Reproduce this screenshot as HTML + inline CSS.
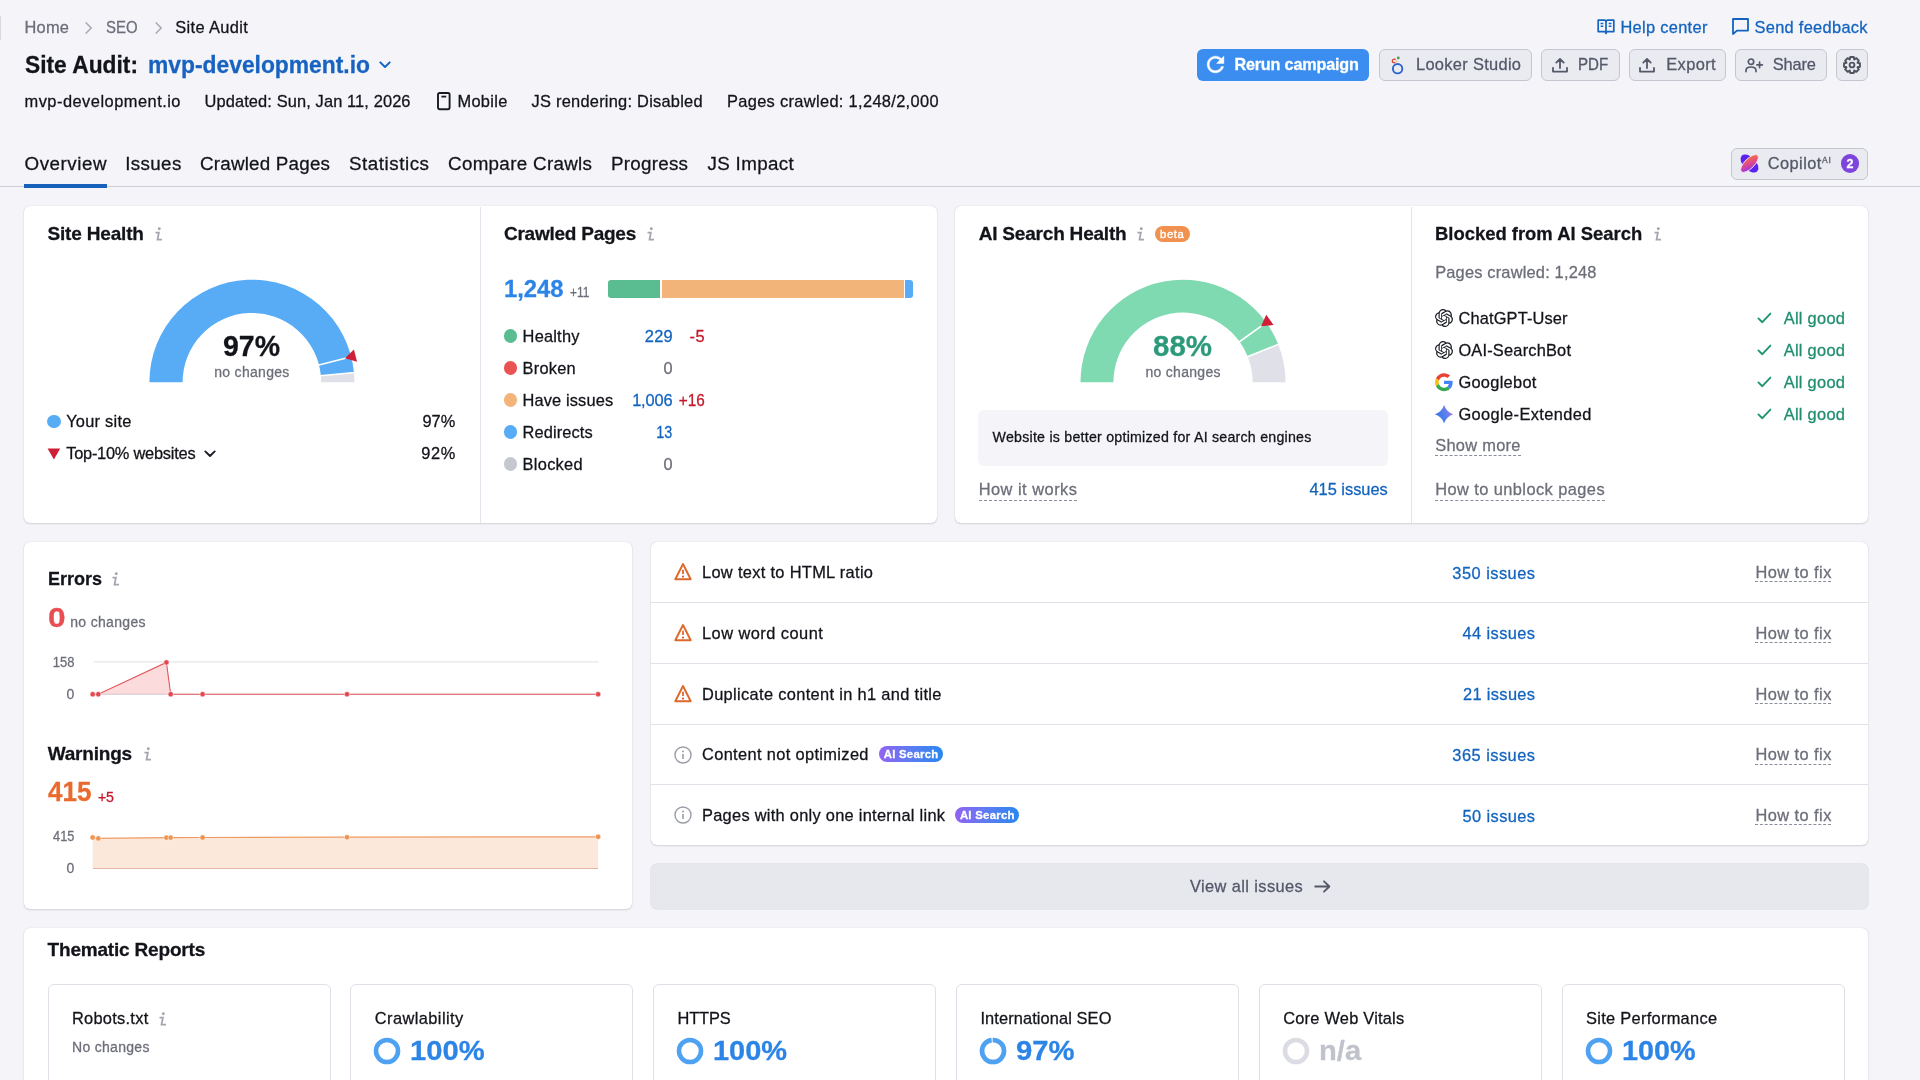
<!DOCTYPE html><html><head><meta charset="utf-8"><title>Site Audit</title><style>
*{box-sizing:border-box;margin:0;padding:0}
html,body{width:1920px;height:1080px;overflow:hidden;background:#f4f4f9;font-family:"Liberation Sans",sans-serif;}
body{position:relative}
#w{position:absolute;left:0;top:0;width:1920px;height:1080px;overflow:hidden;background:#f4f4f9;will-change:transform;transform:translateZ(0)}
.t{position:absolute;white-space:nowrap;font-family:"Liberation Sans",sans-serif;-webkit-text-stroke:.28px currentColor}
.a{position:absolute}
.card{position:absolute;background:#fff;border-radius:6px;box-shadow:0 0 1px rgba(25,27,35,.2),0 1px 2px rgba(25,27,35,.14)}
.btn{position:absolute;height:32px;top:49px;border-radius:6px;background:#e9ebf0;border:1px solid #c4c7cf}
.sub{position:absolute;top:983.6px;height:120px;width:283px;border:1px solid #dfe0e7;border-radius:6px;background:#fff}
.du{border-bottom:1px dashed #8a8e9b}
svg{position:absolute;overflow:visible}

</style></head><body><div id="w">
<div class="a" style="left:0;top:16px;width:1.1px;height:24px;background:#d9dae0"></div>
<svg style="left:85.3px;top:21.5px" width="8" height="12" viewBox="0 0 8 12" ><path d="M1.2 1 L6.2 6 L1.2 11" fill="none" stroke="#a9abb6" stroke-width="1.7" stroke-linecap="round" stroke-linejoin="round"/></svg>
<svg style="left:154.6px;top:21.5px" width="8" height="12" viewBox="0 0 8 12" ><path d="M1.2 1 L6.2 6 L1.2 11" fill="none" stroke="#a9abb6" stroke-width="1.7" stroke-linecap="round" stroke-linejoin="round"/></svg>
<svg style="left:378.8px;top:60.5px" width="12" height="8" viewBox="0 0 12 8" ><path d="M1.3 1.4 L6 6 L10.7 1.4" fill="none" stroke="#1467c5" stroke-width="2" stroke-linecap="round" stroke-linejoin="round"/></svg>
<svg style="left:436.7px;top:92.4px" width="14" height="18" viewBox="0 0 14 18" ><rect x="1" y="1" width="11.6" height="16.2" rx="1.6" fill="none" stroke="#191b23" stroke-width="1.9"/><path d="M4.4 4.6 H9.2" stroke="#191b23" stroke-width="1.8" stroke-linecap="butt"/></svg>
<div class="a" style="left:0;top:185.8px;width:1920px;height:1.4px;background:#cdd0d7"></div>
<div class="a" style="left:24px;top:184.2px;width:83px;height:3.5px;background:#1861bb"></div>
<svg style="left:1597px;top:18px" width="18" height="18" viewBox="0 0 18 18" ><path d="M9 3.6 V15.6 M1.2 2.2 H7.2 Q9 2.2 9 4 Q9 2.2 10.8 2.2 H16.8 V13.6 H10.8 Q9 13.6 9 15.4 Q9 13.6 7.2 13.6 H1.2 Z" fill="none" stroke="#1264bf" stroke-width="1.7" stroke-linejoin="round"/><path d="M3.6 5.4 H6.3 M3.6 8.2 H6.3 M11.7 5.4 H14.4 M11.7 8.2 H14.4" stroke="#1264bf" stroke-width="1.5"/></svg>
<svg style="left:1731.5px;top:18.3px" width="17" height="17" viewBox="0 0 17 17" ><path d="M1 1 H16 V12.6 H5 L1 16 Z" fill="none" stroke="#1264bf" stroke-width="1.8" stroke-linejoin="round"/></svg>
<div class="a" style="left:1197px;top:49px;width:172px;height:32px;border-radius:6px;background:#3b8eef"></div>
<svg style="left:1202.9px;top:52.3px" width="25" height="25" viewBox="0 0 24 24" ><path fill="#fff" stroke="#fff" stroke-width=".45" stroke-linejoin="round" d="M17.65 6.35C16.2 4.9 14.21 4 12 4c-4.42 0-7.99 3.58-7.99 8s3.57 8 7.99 8c3.73 0 6.84-2.55 7.73-6h-2.08c-.82 2.33-3.04 4-5.65 4-3.31 0-6-2.69-6-6s2.69-6 6-6c1.66 0 3.14.69 4.22 1.78L13 11h7V4l-2.35 2.35z"/></svg>
<div class="btn" style="left:1379px;width:153px"></div>
<svg style="left:1391px;top:55.5px" width="13" height="19" viewBox="0 0 13 19" ><circle cx="6.6" cy="12.7" r="4.7" fill="none" stroke="#2c63d2" stroke-width="1.9"/><path d="M4.6 3.9 A1.8 1.8 0 1 0 4.3 6.3" fill="none" stroke="#d8433b" stroke-width="1.3"/><circle cx="5.8" cy="5.4" r=".8" fill="#f0b840"/><circle cx="7.3" cy="1.9" r="1.35" fill="#3f9b4b"/></svg>
<div class="btn" style="left:1541px;width:79px"></div>
<div class="btn" style="left:1629px;width:97px"></div>
<div class="btn" style="left:1735px;width:92px"></div>
<div class="btn" style="left:1836px;width:32px"></div>
<svg style="left:1551.5px;top:56.5px" width="16" height="16" viewBox="0 0 16 16" ><path d="M8 11 V2.4 M4.3 5.6 L8 1.9 L11.7 5.6" fill="none" stroke="#545868" stroke-width="1.8" stroke-linecap="round" stroke-linejoin="round"/><path d="M1 10.8 V14.6 H15 V10.8" fill="none" stroke="#545868" stroke-width="1.8" stroke-linecap="round" stroke-linejoin="round"/></svg>
<svg style="left:1639.3px;top:56.5px" width="16" height="16" viewBox="0 0 16 16" ><path d="M8 11 V2.4 M4.3 5.6 L8 1.9 L11.7 5.6" fill="none" stroke="#545868" stroke-width="1.8" stroke-linecap="round" stroke-linejoin="round"/><path d="M1 10.8 V14.6 H15 V10.8" fill="none" stroke="#545868" stroke-width="1.8" stroke-linecap="round" stroke-linejoin="round"/></svg>
<svg style="left:1744.5px;top:57.5px" width="19" height="15" viewBox="0 0 19 15" ><circle cx="6" cy="3.7" r="2.7" fill="none" stroke="#545868" stroke-width="1.7"/><path d="M1 13.6 V12.4 Q1 9 6 9 Q11 9 11 12.4 V13.6" fill="none" stroke="#545868" stroke-width="1.7" stroke-linecap="round"/><path d="M14.6 4.2 V9.6 M11.9 6.9 H17.3" stroke="#545868" stroke-width="1.7" stroke-linecap="round"/></svg>
<svg style="left:1843.3px;top:55.9px" width="18" height="18" viewBox="0 0 18 18" ><path d="M7.31 1.08 L10.69 1.08 L11.28 3.45 L11.31 3.46 L13.41 2.20 L15.80 4.59 L14.54 6.69 L14.55 6.72 L16.92 7.31 L16.92 10.69 L14.55 11.28 L14.54 11.31 L15.80 13.41 L13.41 15.80 L11.31 14.54 L11.28 14.55 L10.69 16.92 L7.31 16.92 L6.72 14.55 L6.69 14.54 L4.59 15.80 L2.20 13.41 L3.46 11.31 L3.45 11.28 L1.08 10.69 L1.08 7.31 L3.45 6.72 L3.46 6.69 L2.20 4.59 L4.59 2.20 L6.69 3.46 L6.72 3.45 Z" fill="none" stroke="#50535f" stroke-width="2" stroke-linejoin="round"/><circle cx="9" cy="9" r="2.4" fill="none" stroke="#50535f" stroke-width="1.9"/></svg>
<div class="btn" style="left:1731px;top:147.5px;width:137px"></div>
<svg style="left:1739.5px;top:153.8px" width="19" height="19" viewBox="0 0 19 19" ><defs><linearGradient id="cg" x1="1" y1="0" x2="0" y2="1"><stop offset=".12" stop-color="#f4743a"/><stop offset=".5" stop-color="#dc4a8c"/><stop offset=".9" stop-color="#9a2fe6"/></linearGradient></defs><ellipse cx="9.5" cy="9.5" rx="11" ry="6.3" transform="rotate(45 9.5 9.5)" fill="#5a22f2"/><ellipse cx="9.5" cy="9.5" rx="11.6" ry="4.9" transform="rotate(-45 9.5 9.5)" fill="url(#cg)" stroke="#f6e6fa" stroke-width=".9"/></svg>
<div class="a" style="left:1840.7px;top:154.2px;width:18.6px;height:18.6px;border-radius:50%;background:#7d45dc"></div>
<div class="card" style="left:23.7px;top:206px;width:913.5px;height:317.2px"></div>
<div class="a" style="left:480px;top:207px;width:1px;height:316px;background:#e4e5ec"></div>
<div class="card" style="left:955.4px;top:206px;width:912.4px;height:317.2px"></div>
<div class="a" style="left:1411px;top:207px;width:1px;height:316px;background:#e4e5ec"></div>
<svg style="left:155px;top:227px" width="8" height="14" viewBox="0 0 8 14" ><circle cx="4.3" cy="1.7" r="1.45" fill="#a3a6b0"/><path d="M0.5 5.5 H3.9 L2.5 12.5 H7" fill="none" stroke="#a3a6b0" stroke-width="1.75" stroke-linejoin="miter"/></svg>
<svg style="left:0;top:0" width="1920" height="540" viewBox="0 0 1920 540"><path d="M149.40 382.20 A102.5 102.5 0 0 1 353.95 372.55 L320.89 375.68 A69.3 69.3 0 0 0 182.60 382.20 Z" fill="#58acf5"/><path d="M353.95 372.55 A102.5 102.5 0 0 1 354.40 382.20 L321.20 382.20 A69.3 69.3 0 0 0 320.89 375.68 Z" fill="#dfe0e8"/><path d="M319.90 375.77 L354.94 372.46" stroke="#fff" stroke-width="1.6"/><path d="M318.05 365.21 L352.15 356.46" stroke="#fff" stroke-width="1.7"/><polygon points="344.88,358.33 357.06,361.73 353.92,349.48" fill="#cf1f38"/></svg>
<div class="a" style="left:47.2px;top:414.6px;width:13.6px;height:13.6px;border-radius:50%;background:#58acf5"></div>
<svg style="left:47.3px;top:447.6px" width="14" height="12" viewBox="0 0 14 12" ><path d="M0.6 0.6 H13.2 L6.9 11.6 Z" fill="#cf1f38"/></svg>
<svg style="left:204px;top:449.6px" width="12" height="8" viewBox="0 0 12 8" ><path d="M1.3 1.4 L6 6 L10.7 1.4" fill="none" stroke="#191b23" stroke-width="1.9" stroke-linecap="round" stroke-linejoin="round"/></svg>
<svg style="left:647px;top:227px" width="8" height="14" viewBox="0 0 8 14" ><circle cx="4.3" cy="1.7" r="1.45" fill="#a3a6b0"/><path d="M0.5 5.5 H3.9 L2.5 12.5 H7" fill="none" stroke="#a3a6b0" stroke-width="1.75" stroke-linejoin="miter"/></svg>
<div class="a" style="left:607.7px;top:279.8px;width:52.5px;height:18px;background:#59bd91;border-radius:3px 0 0 3px"></div>
<div class="a" style="left:661.6px;top:279.8px;width:242.4px;height:18px;background:#f3b479"></div>
<div class="a" style="left:905.3px;top:279.8px;width:8px;height:18px;background:#58acf5;border-radius:0 3px 3px 0"></div>
<div class="a" style="left:504px;top:329.4px;width:13.4px;height:13.4px;border-radius:50%;background:#59bd91"></div>
<div class="a" style="left:504px;top:361.4px;width:13.4px;height:13.4px;border-radius:50%;background:#ea5353"></div>
<div class="a" style="left:504px;top:393.4px;width:13.4px;height:13.4px;border-radius:50%;background:#f3b479"></div>
<div class="a" style="left:504px;top:425.4px;width:13.4px;height:13.4px;border-radius:50%;background:#58acf5"></div>
<div class="a" style="left:504px;top:457.4px;width:13.4px;height:13.4px;border-radius:50%;background:#c6c8d0"></div>
<svg style="left:1137.3px;top:227px" width="8" height="14" viewBox="0 0 8 14" ><circle cx="4.3" cy="1.7" r="1.45" fill="#a3a6b0"/><path d="M0.5 5.5 H3.9 L2.5 12.5 H7" fill="none" stroke="#a3a6b0" stroke-width="1.75" stroke-linejoin="miter"/></svg>
<div class="a" style="left:1154.7px;top:225.9px;width:35.1px;height:15.8px;border-radius:8px;background:#f1914f"></div>
<svg style="left:0;top:0" width="1920" height="540" viewBox="0 0 1920 540"><path d="M1080.50 382.20 A102.5 102.5 0 0 1 1278.30 344.47 L1247.71 356.58 A69.6 69.6 0 0 0 1113.40 382.20 Z" fill="#7fd9b1"/><path d="M1278.30 344.47 A102.5 102.5 0 0 1 1285.50 382.20 L1252.60 382.20 A69.6 69.6 0 0 0 1247.71 356.58 Z" fill="#dfe0e8"/><path d="M1246.78 356.95 L1279.23 344.10" stroke="#fff" stroke-width="1.6"/><path d="M1238.75 342.23 L1267.11 321.89" stroke="#fff" stroke-width="1.7"/><polygon points="1261.02,326.26 1273.60,325.02 1266.23,314.74" fill="#cf1f38"/></svg>
<div class="a" style="left:978.3px;top:410px;width:409.7px;height:55.6px;border-radius:6px;background:#f4f4f9"></div>
<div class="a" style="left:978.7px;top:499.5px;width:98.29999999999995px;height:0;border-top:1px dashed #8a8e9b"></div>
<svg style="left:1653.6px;top:227px" width="8" height="14" viewBox="0 0 8 14" ><circle cx="4.3" cy="1.7" r="1.45" fill="#a3a6b0"/><path d="M0.5 5.5 H3.9 L2.5 12.5 H7" fill="none" stroke="#a3a6b0" stroke-width="1.75" stroke-linejoin="miter"/></svg>
<svg style="left:1757.2px;top:312.09999999999997px" width="15" height="12" viewBox="0 0 15 12" ><path d="M1.4 6.4 L5.3 10.2 L13.4 1.6" fill="none" stroke="#1f9473" stroke-width="1.9" stroke-linecap="round" stroke-linejoin="round"/></svg>
<svg style="left:1757.2px;top:344.2px" width="15" height="12" viewBox="0 0 15 12" ><path d="M1.4 6.4 L5.3 10.2 L13.4 1.6" fill="none" stroke="#1f9473" stroke-width="1.9" stroke-linecap="round" stroke-linejoin="round"/></svg>
<svg style="left:1757.2px;top:376.29999999999995px" width="15" height="12" viewBox="0 0 15 12" ><path d="M1.4 6.4 L5.3 10.2 L13.4 1.6" fill="none" stroke="#1f9473" stroke-width="1.9" stroke-linecap="round" stroke-linejoin="round"/></svg>
<svg style="left:1757.2px;top:408.4px" width="15" height="12" viewBox="0 0 15 12" ><path d="M1.4 6.4 L5.3 10.2 L13.4 1.6" fill="none" stroke="#1f9473" stroke-width="1.9" stroke-linecap="round" stroke-linejoin="round"/></svg>
<div class="a" style="left:1435.2px;top:455px;width:85.39999999999986px;height:0;border-top:1px dashed #8a8e9b"></div>
<div class="a" style="left:1435.2px;top:499.5px;width:169.5px;height:0;border-top:1px dashed #8a8e9b"></div>
<div class="card" style="left:23.7px;top:541.9px;width:608.8px;height:367.2px"></div>
<svg style="left:112.3px;top:572.2px" width="8" height="14" viewBox="0 0 8 14" ><circle cx="4.3" cy="1.7" r="1.45" fill="#a3a6b0"/><path d="M0.5 5.5 H3.9 L2.5 12.5 H7" fill="none" stroke="#a3a6b0" stroke-width="1.75" stroke-linejoin="miter"/></svg>
<svg style="left:143.5px;top:747px" width="8" height="14" viewBox="0 0 8 14" ><circle cx="4.3" cy="1.7" r="1.45" fill="#a3a6b0"/><path d="M0.5 5.5 H3.9 L2.5 12.5 H7" fill="none" stroke="#a3a6b0" stroke-width="1.75" stroke-linejoin="miter"/></svg>
<svg style="left:0;top:0" width="700" height="920" viewBox="0 0 700 920"><path d="M93.5 661.9 H598.5" stroke="#e0e1e9" stroke-width="1"/><path d="M93 694.3 H598" stroke="#d1d4db" stroke-width="1"/><polygon points="92.7,694.2 98.3,694.2 166.4,662.4 170.7,694.2 202.6,694.2 347,694.2 598.1,694.2" fill="#e94d52" fill-opacity=".2"/><polyline points="92.7,694.2 98.3,694.2 166.4,662.4 170.7,694.2 202.6,694.2 347,694.2 598.1,694.2" fill="none" stroke="#e4575c" stroke-width="1.1"/><circle cx="92.7" cy="694.2" r="2.7" fill="#e2494f" stroke="#fff" stroke-width=".6"/><circle cx="98.3" cy="694.2" r="2.7" fill="#e2494f" stroke="#fff" stroke-width=".6"/><circle cx="166.4" cy="662.4" r="2.7" fill="#e2494f" stroke="#fff" stroke-width=".6"/><circle cx="170.7" cy="694.2" r="2.7" fill="#e2494f" stroke="#fff" stroke-width=".6"/><circle cx="202.6" cy="694.2" r="2.7" fill="#e2494f" stroke="#fff" stroke-width=".6"/><circle cx="347" cy="694.2" r="2.7" fill="#e2494f" stroke="#fff" stroke-width=".6"/><circle cx="598.1" cy="694.2" r="2.7" fill="#e2494f" stroke="#fff" stroke-width=".6"/><polygon points="92.7,837.5 98.3,838.4 166.4,837.6 170.7,837.6 202.6,837.5 347,837.2 598.1,836.8 598.1,868.4 92.7,868.4" fill="#f3a06e" fill-opacity=".25"/><path d="M93 868.5 H598" stroke="#e3b9a4" stroke-width="1"/><polyline points="92.7,837.5 98.3,838.4 166.4,837.6 170.7,837.6 202.6,837.5 347,837.2 598.1,836.8" fill="none" stroke="#ee9b63" stroke-width="1.2"/><circle cx="92.7" cy="837.5" r="2.7" fill="#ee9450" stroke="#fff" stroke-width=".6"/><circle cx="98.3" cy="838.4" r="2.7" fill="#ee9450" stroke="#fff" stroke-width=".6"/><circle cx="166.4" cy="837.6" r="2.7" fill="#ee9450" stroke="#fff" stroke-width=".6"/><circle cx="170.7" cy="837.6" r="2.7" fill="#ee9450" stroke="#fff" stroke-width=".6"/><circle cx="202.6" cy="837.5" r="2.7" fill="#ee9450" stroke="#fff" stroke-width=".6"/><circle cx="347" cy="837.2" r="2.7" fill="#ee9450" stroke="#fff" stroke-width=".6"/><circle cx="598.1" cy="836.8" r="2.7" fill="#ee9450" stroke="#fff" stroke-width=".6"/></svg>
<div class="card" style="left:650.8px;top:541.9px;width:1217px;height:303.2px"></div>
<div class="a" style="left:651px;top:602.3px;width:1217px;height:1px;background:#e0e1e9"></div>
<div class="a" style="left:651px;top:663.3px;width:1217px;height:1px;background:#e0e1e9"></div>
<div class="a" style="left:651px;top:723.9px;width:1217px;height:1px;background:#e0e1e9"></div>
<div class="a" style="left:651px;top:784px;width:1217px;height:1px;background:#e0e1e9"></div>
<svg style="left:674.2px;top:562.0px" width="18" height="19" viewBox="0 0 18 19" ><path d="M9 2 L16.7 17.3 H1.3 Z" fill="none" stroke="#de682b" stroke-width="1.9" stroke-linejoin="round"/><path d="M9 7.7 V12.1" stroke="#de682b" stroke-width="1.8"/><circle cx="9" cy="14.6" r="1.05" fill="#d4502f"/></svg>
<div class="a" style="left:1755.4px;top:581px;width:76.0px;height:0;border-top:1px dashed #8a8e9b"></div>
<svg style="left:674.2px;top:622.8px" width="18" height="19" viewBox="0 0 18 19" ><path d="M9 2 L16.7 17.3 H1.3 Z" fill="none" stroke="#de682b" stroke-width="1.9" stroke-linejoin="round"/><path d="M9 7.7 V12.1" stroke="#de682b" stroke-width="1.8"/><circle cx="9" cy="14.6" r="1.05" fill="#d4502f"/></svg>
<div class="a" style="left:1755.4px;top:642px;width:76.0px;height:0;border-top:1px dashed #8a8e9b"></div>
<svg style="left:674.2px;top:683.6px" width="18" height="19" viewBox="0 0 18 19" ><path d="M9 2 L16.7 17.3 H1.3 Z" fill="none" stroke="#de682b" stroke-width="1.9" stroke-linejoin="round"/><path d="M9 7.7 V12.1" stroke="#de682b" stroke-width="1.8"/><circle cx="9" cy="14.6" r="1.05" fill="#d4502f"/></svg>
<div class="a" style="left:1755.4px;top:703px;width:76.0px;height:0;border-top:1px dashed #8a8e9b"></div>
<svg style="left:674.2px;top:745.5px" width="18" height="18" viewBox="0 0 18 18" ><circle cx="9" cy="9" r="8" fill="none" stroke="#9a9da8" stroke-width="1.4"/><path d="M9 8 V13" stroke="#9a9da8" stroke-width="1.6"/><circle cx="9" cy="5.4" r="1" fill="#9a9da8"/></svg>
<div class="a" style="left:1755.4px;top:764px;width:76.0px;height:0;border-top:1px dashed #8a8e9b"></div>
<div class="a" style="left:878.7px;top:746.3px;width:64.6px;height:15.9px;border-radius:8px;background:linear-gradient(90deg,#9163f1 0%,#5c7cf2 50%,#2887ef 100%)"></div>
<svg style="left:674.2px;top:806.3px" width="18" height="18" viewBox="0 0 18 18" ><circle cx="9" cy="9" r="8" fill="none" stroke="#9a9da8" stroke-width="1.4"/><path d="M9 8 V13" stroke="#9a9da8" stroke-width="1.6"/><circle cx="9" cy="5.4" r="1" fill="#9a9da8"/></svg>
<div class="a" style="left:1755.4px;top:824px;width:76.0px;height:0;border-top:1px dashed #8a8e9b"></div>
<div class="a" style="left:954.9px;top:807.1px;width:64.6px;height:15.9px;border-radius:8px;background:linear-gradient(90deg,#9163f1 0%,#5c7cf2 50%,#2887ef 100%)"></div>
<div class="a" style="left:651px;top:863.7px;width:1217px;height:45.6px;border-radius:6px;background:#e6e8ee;box-shadow:0 0 0 .5px rgba(138,142,155,.25)"></div>
<svg style="left:1313.5px;top:879.5px" width="17" height="13" viewBox="0 0 17 13" ><path d="M1.2 6.5 H15.4 M10 1.3 L15.4 6.5 L10 11.7" fill="none" stroke="#545868" stroke-width="1.8" stroke-linecap="round" stroke-linejoin="round"/></svg>
<div class="card" style="left:24px;top:928px;width:1844px;height:200px"></div>
<div class="sub" style="left:47.6px"></div>
<svg style="left:158.8px;top:1012.2px" width="8" height="14" viewBox="0 0 8 14" ><circle cx="4.3" cy="1.7" r="1.45" fill="#a3a6b0"/><path d="M0.5 5.5 H3.9 L2.5 12.5 H7" fill="none" stroke="#a3a6b0" stroke-width="1.75" stroke-linejoin="miter"/></svg>
<div class="sub" style="left:350.40000000000003px"></div>
<svg style="left:373.3px;top:1036.6px" width="28" height="28" viewBox="0 0 28 28" ><circle cx="14" cy="14" r="11" fill="none" stroke="#4ea2f1" stroke-width="4.6"/></svg>
<div class="sub" style="left:653.2px"></div>
<svg style="left:676.1px;top:1036.6px" width="28" height="28" viewBox="0 0 28 28" ><circle cx="14" cy="14" r="11" fill="none" stroke="#4ea2f1" stroke-width="4.6"/></svg>
<div class="sub" style="left:956.0000000000001px"></div>
<svg style="left:978.9000000000001px;top:1036.6px" width="28" height="28" viewBox="0 0 28 28" ><circle cx="14" cy="14" r="11" fill="none" stroke="#bfdcfa" stroke-width="4.6"/><circle cx="14" cy="14" r="11" fill="none" stroke="#4ea2f1" stroke-width="4.6" stroke-dasharray="67.04 100" transform="rotate(-90 14 14)"/></svg>
<div class="sub" style="left:1258.8px"></div>
<svg style="left:1281.7px;top:1036.6px" width="28" height="28" viewBox="0 0 28 28" ><circle cx="14" cy="14" r="11" fill="none" stroke="#dcdde4" stroke-width="4.6"/></svg>
<div class="sub" style="left:1561.6px"></div>
<svg style="left:1584.5px;top:1036.6px" width="28" height="28" viewBox="0 0 28 28" ><circle cx="14" cy="14" r="11" fill="none" stroke="#4ea2f1" stroke-width="4.6"/></svg>
<svg style="left:1435.3px;top:308.7px" width="18" height="18" viewBox="0 0 24 24" ><path fill="#191b23" d="M22.2819 9.8211a5.9847 5.9847 0 0 0-.5157-4.9108 6.0462 6.0462 0 0 0-6.5098-2.9A6.0651 6.0651 0 0 0 4.9807 4.1818a5.9847 5.9847 0 0 0-3.9977 2.9 6.0462 6.0462 0 0 0 .7427 7.0966 5.98 5.98 0 0 0 .511 4.9107 6.051 6.051 0 0 0 6.5146 2.9001A5.9847 5.9847 0 0 0 13.2599 24a6.0557 6.0557 0 0 0 5.7718-4.2058 5.9894 5.9894 0 0 0 3.9977-2.9001 6.0557 6.0557 0 0 0-.7475-7.0729zm-9.022 12.6081a4.4755 4.4755 0 0 1-2.8764-1.0408l.1419-.0804 4.7783-2.7582a.7948.7948 0 0 0 .3927-.6813v-6.7369l2.02 1.1686a.071.071 0 0 1 .038.052v5.5826a4.504 4.504 0 0 1-4.4945 4.4944zm-9.6607-4.1254a4.4708 4.4708 0 0 1-.5346-3.0137l.142.0852 4.783 2.7582a.7712.7712 0 0 0 .7806 0l5.8428-3.3685v2.3324a.0804.0804 0 0 1-.0332.0615L9.74 19.9502a4.4992 4.4992 0 0 1-6.1408-1.6464zM2.3408 7.8956a4.485 4.485 0 0 1 2.3655-1.9728V11.6a.7664.7664 0 0 0 .3879.6765l5.8144 3.3543-2.0201 1.1685a.0757.0757 0 0 1-.071 0l-4.8303-2.7865A4.504 4.504 0 0 1 2.3408 7.872zm16.5963 3.8558L13.1038 8.364 15.1192 7.2a.0757.0757 0 0 1 .071 0l4.8303 2.7913a4.4944 4.4944 0 0 1-.6765 8.1042v-5.6772a.79.79 0 0 0-.407-.667zm2.0107-3.0231l-.142-.0852-4.7735-2.7818a.7759.7759 0 0 0-.7854 0L9.409 9.2297V6.8974a.0662.0662 0 0 1 .0284-.0615l4.8303-2.7866a4.4992 4.4992 0 0 1 6.6802 4.66zM8.3065 12.863l-2.02-1.1638a.0804.0804 0 0 1-.038-.0567V6.0742a4.4992 4.4992 0 0 1 7.3757-3.4537l-.142.0805L8.704 5.459a.7948.7948 0 0 0-.3927.6813zm1.0976-2.3654l2.602-1.4998 2.6069 1.4998v2.9994l-2.5974 1.4997-2.6067-1.4997Z"/></svg>
<svg style="left:1435.3px;top:341px" width="18" height="18" viewBox="0 0 24 24" ><path fill="#191b23" d="M22.2819 9.8211a5.9847 5.9847 0 0 0-.5157-4.9108 6.0462 6.0462 0 0 0-6.5098-2.9A6.0651 6.0651 0 0 0 4.9807 4.1818a5.9847 5.9847 0 0 0-3.9977 2.9 6.0462 6.0462 0 0 0 .7427 7.0966 5.98 5.98 0 0 0 .511 4.9107 6.051 6.051 0 0 0 6.5146 2.9001A5.9847 5.9847 0 0 0 13.2599 24a6.0557 6.0557 0 0 0 5.7718-4.2058 5.9894 5.9894 0 0 0 3.9977-2.9001 6.0557 6.0557 0 0 0-.7475-7.0729zm-9.022 12.6081a4.4755 4.4755 0 0 1-2.8764-1.0408l.1419-.0804 4.7783-2.7582a.7948.7948 0 0 0 .3927-.6813v-6.7369l2.02 1.1686a.071.071 0 0 1 .038.052v5.5826a4.504 4.504 0 0 1-4.4945 4.4944zm-9.6607-4.1254a4.4708 4.4708 0 0 1-.5346-3.0137l.142.0852 4.783 2.7582a.7712.7712 0 0 0 .7806 0l5.8428-3.3685v2.3324a.0804.0804 0 0 1-.0332.0615L9.74 19.9502a4.4992 4.4992 0 0 1-6.1408-1.6464zM2.3408 7.8956a4.485 4.485 0 0 1 2.3655-1.9728V11.6a.7664.7664 0 0 0 .3879.6765l5.8144 3.3543-2.0201 1.1685a.0757.0757 0 0 1-.071 0l-4.8303-2.7865A4.504 4.504 0 0 1 2.3408 7.872zm16.5963 3.8558L13.1038 8.364 15.1192 7.2a.0757.0757 0 0 1 .071 0l4.8303 2.7913a4.4944 4.4944 0 0 1-.6765 8.1042v-5.6772a.79.79 0 0 0-.407-.667zm2.0107-3.0231l-.142-.0852-4.7735-2.7818a.7759.7759 0 0 0-.7854 0L9.409 9.2297V6.8974a.0662.0662 0 0 1 .0284-.0615l4.8303-2.7866a4.4992 4.4992 0 0 1 6.6802 4.66zM8.3065 12.863l-2.02-1.1638a.0804.0804 0 0 1-.038-.0567V6.0742a4.4992 4.4992 0 0 1 7.3757-3.4537l-.142.0805L8.704 5.459a.7948.7948 0 0 0-.3927.6813zm1.0976-2.3654l2.602-1.4998 2.6069 1.4998v2.9994l-2.5974 1.4997-2.6067-1.4997Z"/></svg>
<svg style="left:1435.2px;top:373.2px" width="18" height="18.4" viewBox="0 0 48 48" ><path fill="#EA4335" d="M24 9.5c3.54 0 6.71 1.22 9.21 3.6l6.85-6.85C35.9 2.38 30.47 0 24 0 14.62 0 6.51 5.38 2.56 13.22l7.98 6.19C12.43 13.72 17.74 9.5 24 9.5z"/><path fill="#4285F4" d="M46.98 24.55c0-1.57-.15-3.09-.38-4.55H24v9.02h12.94c-.58 2.96-2.26 5.48-4.78 7.18l7.73 6c4.51-4.18 7.09-10.36 7.09-17.65z"/><path fill="#FBBC05" d="M10.53 28.59c-.48-1.45-.76-2.99-.76-4.59s.27-3.14.76-4.59l-7.98-6.19C.92 16.46 0 20.12 0 24c0 3.88.92 7.54 2.56 10.78l7.97-6.19z"/><path fill="#34A853" d="M24 48c6.48 0 11.93-2.13 15.89-5.81l-7.73-6c-2.15 1.45-4.92 2.3-8.16 2.3-6.26 0-11.57-4.22-13.47-9.91l-7.98 6.19C6.51 42.62 14.62 48 24 48z"/></svg>
<svg style="left:1435px;top:405.4px" width="18.2" height="18.4" viewBox="0 0 24 24" ><defs><linearGradient id="gm" x1="0" y1=".7" x2="1" y2=".3"><stop offset="0" stop-color="#2f74e6"/><stop offset=".55" stop-color="#5a80ea"/><stop offset="1" stop-color="#a77cf2"/></linearGradient></defs><path fill="url(#gm)" d="M12 0Q15 9 24 12Q15 15 12 24Q9 15 0 12Q9 9 12 0Z"/></svg>
<span class="t" style="top:17.00px;font-size:16.4px;line-height:20px;color:#6c6e79;letter-spacing:0.255px;left:24.50px;">Home</span>
<span class="t" style="top:17.00px;font-size:16.4px;line-height:20px;color:#6c6e79;left:106.30px;transform:scaleX(0.9097);transform-origin:left center;">SEO</span>
<span class="t" style="top:17.00px;font-size:16.4px;line-height:20px;color:#13141a;letter-spacing:0.359px;left:175.30px;">Site Audit</span>
<span class="t" style="top:51.00px;font-size:23.5px;line-height:29px;color:#13141a;font-weight:700;left:24.50px;transform:scaleX(0.9689);transform-origin:left center;">Site Audit:</span>
<span class="t" style="top:51.00px;font-size:23.5px;line-height:29px;color:#1763bf;font-weight:700;left:148.00px;transform:scaleX(0.9715);transform-origin:left center;">mvp-development.io</span>
<span class="t" style="top:91.00px;font-size:16.4px;line-height:20px;color:#13141a;letter-spacing:0.494px;left:24.50px;">mvp-development.io</span>
<span class="t" style="top:91.00px;font-size:16.4px;line-height:20px;color:#13141a;letter-spacing:0.123px;left:204.50px;">Updated: Sun, Jan 11, 2026</span>
<span class="t" style="top:91.00px;font-size:16.4px;line-height:20px;color:#13141a;letter-spacing:0.341px;left:457.40px;">Mobile</span>
<span class="t" style="top:91.00px;font-size:16.4px;line-height:20px;color:#13141a;letter-spacing:0.246px;left:531.60px;">JS rendering: Disabled</span>
<span class="t" style="top:91.00px;font-size:16.4px;line-height:20px;color:#13141a;letter-spacing:0.332px;left:727.00px;">Pages crawled: 1,248/2,000</span>
<span class="t" style="top:152.00px;font-size:18.8px;line-height:24px;color:#13141a;letter-spacing:0.531px;left:24.50px;">Overview</span>
<span class="t" style="top:152.00px;font-size:18.8px;line-height:24px;color:#13141a;letter-spacing:0.344px;left:125.30px;">Issues</span>
<span class="t" style="top:152.00px;font-size:18.8px;line-height:24px;color:#13141a;letter-spacing:0.219px;left:200.00px;">Crawled Pages</span>
<span class="t" style="top:152.00px;font-size:18.8px;line-height:24px;color:#13141a;letter-spacing:0.538px;left:349.00px;">Statistics</span>
<span class="t" style="top:152.00px;font-size:18.8px;line-height:24px;color:#13141a;letter-spacing:0.319px;left:448.00px;">Compare Crawls</span>
<span class="t" style="top:152.00px;font-size:18.8px;line-height:24px;color:#13141a;letter-spacing:0.263px;left:611.00px;">Progress</span>
<span class="t" style="top:152.00px;font-size:18.8px;line-height:24px;color:#13141a;letter-spacing:0.350px;left:707.40px;">JS Impact</span>
<span class="t" style="top:17.00px;font-size:16.4px;line-height:20px;color:#1264bf;letter-spacing:0.317px;left:1620.40px;">Help center</span>
<span class="t" style="top:17.00px;font-size:16.4px;line-height:20px;color:#1264bf;letter-spacing:0.303px;left:1754.50px;">Send feedback</span>
<span class="t" style="top:54.00px;font-size:16.2px;line-height:20px;color:#fff;font-weight:700;letter-spacing:-0.180px;left:1234.40px;">Rerun campaign</span>
<span class="t" style="top:54.00px;font-size:16.4px;line-height:20px;color:#545868;letter-spacing:0.320px;left:1416.00px;">Looker Studio</span>
<span class="t" style="top:54.00px;font-size:16.4px;line-height:20px;color:#545868;left:1578.40px;transform:scaleX(0.9239);transform-origin:left center;">PDF</span>
<span class="t" style="top:54.00px;font-size:16.4px;line-height:20px;color:#545868;letter-spacing:0.385px;left:1666.30px;">Export</span>
<span class="t" style="top:54.00px;font-size:16.4px;line-height:20px;color:#545868;letter-spacing:-0.137px;left:1772.80px;">Share</span>
<span class="t" style="top:153.00px;font-size:16.4px;line-height:20px;color:#545868;letter-spacing:0.445px;left:1767.70px;">Copilot</span>
<span class="t" style="top:155.00px;font-size:8.6px;line-height:11px;color:#545868;letter-spacing:0.875px;left:1822.00px;">AI</span>
<span class="t" style="top:156.00px;font-size:12.5px;line-height:16px;color:#fff;font-weight:700;left:1846.40px;">2</span>
<span class="t" style="top:222.00px;font-size:19px;line-height:24px;color:#13141a;font-weight:700;letter-spacing:-0.180px;left:47.50px;">Site Health</span>
<span class="t" style="top:328.00px;font-size:29px;line-height:36px;color:#13141a;font-weight:700;left:222.80px;transform:scaleX(0.9820);transform-origin:left center;">97%</span>
<span class="t" style="top:363.00px;font-size:14px;line-height:18px;color:#6c6e79;letter-spacing:0.288px;left:214.30px;">no changes</span>
<span class="t" style="top:411.00px;font-size:16.4px;line-height:20px;color:#13141a;letter-spacing:0.252px;left:66.20px;">Your site</span>
<span class="t" style="top:411.00px;font-size:16.4px;line-height:20px;color:#13141a;letter-spacing:-0.006px;right:1464.71px;">97%</span>
<span class="t" style="top:443.00px;font-size:16.4px;line-height:20px;color:#13141a;letter-spacing:-0.241px;left:66.20px;">Top-10% websites</span>
<span class="t" style="top:443.00px;font-size:16.4px;line-height:20px;color:#13141a;letter-spacing:0.594px;right:1464.11px;">92%</span>
<span class="t" style="top:222.00px;font-size:19px;line-height:24px;color:#13141a;font-weight:700;letter-spacing:-0.248px;left:504.00px;">Crawled Pages</span>
<span class="t" style="top:275.00px;font-size:23.5px;line-height:29px;color:#2b84e6;font-weight:700;left:504.00px;transform:scaleX(1.0134);transform-origin:left center;">1,248</span>
<span class="t" style="top:283.00px;font-size:14.2px;line-height:18px;color:#6c6e79;left:569.80px;transform:scaleX(0.8429);transform-origin:left center;">+11</span>
<span class="t" style="top:326.00px;font-size:16.4px;line-height:20px;color:#13141a;letter-spacing:0.204px;left:522.60px;">Healthy</span>
<span class="t" style="top:326.00px;font-size:16.4px;line-height:20px;color:#1264bf;letter-spacing:0.220px;right:1247.18px;">229</span>
<span class="t" style="top:326.00px;font-size:16.4px;line-height:20px;color:#c4182c;letter-spacing:0.422px;right:1215.08px;">-5</span>
<span class="t" style="top:358.00px;font-size:16.4px;line-height:20px;color:#13141a;letter-spacing:0.212px;left:522.60px;">Broken</span>
<span class="t" style="top:358.00px;font-size:16.4px;line-height:20px;color:#6c6e79;right:1247.40px;">0</span>
<span class="t" style="top:390.00px;font-size:16.4px;line-height:20px;color:#13141a;letter-spacing:0.122px;left:522.60px;">Have issues</span>
<span class="t" style="top:390.00px;font-size:16.4px;line-height:20px;color:#1264bf;letter-spacing:-0.133px;right:1247.53px;">1,006</span>
<span class="t" style="top:390.00px;font-size:16.4px;line-height:20px;color:#c4182c;right:1215.50px;transform:scaleX(0.9348);transform-origin:right center;">+16</span>
<span class="t" style="top:422.00px;font-size:16.4px;line-height:20px;color:#13141a;letter-spacing:0.096px;left:522.60px;">Redirects</span>
<span class="t" style="top:422.00px;font-size:16.4px;line-height:20px;color:#1264bf;right:1247.40px;transform:scaleX(0.8775);transform-origin:right center;">13</span>
<span class="t" style="top:454.00px;font-size:16.4px;line-height:20px;color:#13141a;letter-spacing:0.281px;left:522.60px;">Blocked</span>
<span class="t" style="top:454.00px;font-size:16.4px;line-height:20px;color:#6c6e79;right:1247.40px;">0</span>
<span class="t" style="top:222.00px;font-size:19px;line-height:24px;color:#13141a;font-weight:700;letter-spacing:-0.200px;left:978.70px;">AI Search Health</span>
<span class="t" style="top:227.00px;font-size:11.3px;line-height:14px;color:#fff;letter-spacing:0.600px;left:1160.10px;-webkit-text-stroke:.4px #fff;">beta</span>
<span class="t" style="top:328.00px;font-size:29px;line-height:36px;color:#2c9a7a;font-weight:700;left:1153.40px;transform:scaleX(1.0164);transform-origin:left center;">88%</span>
<span class="t" style="top:363.00px;font-size:14px;line-height:18px;color:#6c6e79;letter-spacing:0.288px;left:1145.50px;">no changes</span>
<span class="t" style="top:428.00px;font-size:14.2px;line-height:18px;color:#13141a;letter-spacing:0.238px;left:992.60px;">Website is better optimized for AI search engines</span>
<span class="t" style="top:479.00px;font-size:16.4px;line-height:20px;color:#6c6e79;letter-spacing:0.490px;left:978.70px;">How it works</span>
<span class="t" style="top:479.00px;font-size:16.4px;line-height:20px;color:#1264bf;letter-spacing:-0.019px;right:532.32px;">415 issues</span>
<span class="t" style="top:222.00px;font-size:19px;line-height:24px;color:#13141a;font-weight:700;left:1435.20px;transform:scaleX(0.9699);transform-origin:left center;">Blocked from AI Search</span>
<span class="t" style="top:262.00px;font-size:16.4px;line-height:20px;color:#6c6e79;letter-spacing:0.187px;left:1435.20px;">Pages crawled: 1,248</span>
<span class="t" style="top:308.00px;font-size:16.4px;line-height:20px;color:#13141a;letter-spacing:0.156px;left:1458.40px;">ChatGPT-User</span>
<span class="t" style="top:308.00px;font-size:16.4px;line-height:20px;color:#1f8f6f;letter-spacing:0.281px;right:74.82px;">All good</span>
<span class="t" style="top:340.00px;font-size:16.4px;line-height:20px;color:#13141a;letter-spacing:0.197px;left:1458.40px;">OAI-SearchBot</span>
<span class="t" style="top:340.00px;font-size:16.4px;line-height:20px;color:#1f8f6f;letter-spacing:0.281px;right:74.82px;">All good</span>
<span class="t" style="top:372.00px;font-size:16.4px;line-height:20px;color:#13141a;letter-spacing:0.295px;left:1458.40px;">Googlebot</span>
<span class="t" style="top:372.00px;font-size:16.4px;line-height:20px;color:#1f8f6f;letter-spacing:0.281px;right:74.82px;">All good</span>
<span class="t" style="top:404.00px;font-size:16.4px;line-height:20px;color:#13141a;letter-spacing:0.387px;left:1458.40px;">Google-Extended</span>
<span class="t" style="top:404.00px;font-size:16.4px;line-height:20px;color:#1f8f6f;letter-spacing:0.281px;right:74.82px;">All good</span>
<span class="t" style="top:435.00px;font-size:16.4px;line-height:20px;color:#6c6e79;letter-spacing:0.299px;left:1435.20px;">Show more</span>
<span class="t" style="top:479.00px;font-size:16.4px;line-height:20px;color:#6c6e79;letter-spacing:0.427px;left:1435.20px;">How to unblock pages</span>
<span class="t" style="top:567.00px;font-size:19px;line-height:24px;color:#13141a;font-weight:700;left:47.50px;transform:scaleX(0.9468);transform-origin:left center;">Errors</span>
<span class="t" style="top:601.00px;font-size:27.5px;line-height:34px;color:#e94d52;font-weight:700;left:47.50px;transform:scaleX(1.1506);transform-origin:left center;">0</span>
<span class="t" style="top:613.00px;font-size:14px;line-height:18px;color:#6c6e79;letter-spacing:0.333px;left:70.20px;">no changes</span>
<span class="t" style="top:653.00px;font-size:14px;line-height:18px;color:#6c6e79;right:1845.80px;transform:scaleX(0.9247);transform-origin:right center;">158</span>
<span class="t" style="top:685.00px;font-size:14px;line-height:18px;color:#6c6e79;right:1845.80px;">0</span>
<span class="t" style="top:742.00px;font-size:19px;line-height:24px;color:#13141a;font-weight:700;letter-spacing:-0.194px;left:47.70px;">Warnings</span>
<span class="t" style="top:775.00px;font-size:27.5px;line-height:34px;color:#ea6a2e;font-weight:700;left:47.90px;transform:scaleX(0.9457);transform-origin:left center;">415</span>
<span class="t" style="top:788.00px;font-size:14.2px;line-height:18px;color:#c4182c;letter-spacing:-0.188px;left:97.90px;">+5</span>
<span class="t" style="top:827.00px;font-size:14px;line-height:18px;color:#6c6e79;right:1845.80px;transform:scaleX(0.9118);transform-origin:right center;">415</span>
<span class="t" style="top:859.00px;font-size:14px;line-height:18px;color:#6c6e79;right:1845.80px;">0</span>
<span class="t" style="top:562.00px;font-size:16.4px;line-height:20px;color:#13141a;letter-spacing:0.320px;left:702.00px;">Low text to HTML ratio</span>
<span class="t" style="top:563.00px;font-size:16.4px;line-height:20px;color:#1264bf;letter-spacing:0.481px;right:384.52px;">350 issues</span>
<span class="t" style="top:562.00px;font-size:16.4px;line-height:20px;color:#6c6e79;letter-spacing:0.448px;left:1755.40px;">How to fix</span>
<span class="t" style="top:623.00px;font-size:16.4px;line-height:20px;color:#13141a;letter-spacing:0.461px;left:702.00px;">Low word count</span>
<span class="t" style="top:623.00px;font-size:16.4px;line-height:20px;color:#1264bf;letter-spacing:0.394px;right:384.61px;">44 issues</span>
<span class="t" style="top:623.00px;font-size:16.4px;line-height:20px;color:#6c6e79;letter-spacing:0.448px;left:1755.40px;">How to fix</span>
<span class="t" style="top:684.00px;font-size:16.4px;line-height:20px;color:#13141a;letter-spacing:0.334px;left:702.00px;">Duplicate content in h1 and title</span>
<span class="t" style="top:684.00px;font-size:16.4px;line-height:20px;color:#1264bf;letter-spacing:0.356px;right:384.64px;">21 issues</span>
<span class="t" style="top:684.00px;font-size:16.4px;line-height:20px;color:#6c6e79;letter-spacing:0.448px;left:1755.40px;">How to fix</span>
<span class="t" style="top:744.00px;font-size:16.4px;line-height:20px;color:#13141a;letter-spacing:0.352px;left:702.00px;">Content not optimized</span>
<span class="t" style="top:745.00px;font-size:16.4px;line-height:20px;color:#1264bf;letter-spacing:0.481px;right:384.52px;">365 issues</span>
<span class="t" style="top:744.00px;font-size:16.4px;line-height:20px;color:#6c6e79;letter-spacing:0.448px;left:1755.40px;">How to fix</span>
<span class="t" style="top:747.00px;font-size:11.4px;line-height:14px;color:#fff;font-weight:700;letter-spacing:0.255px;left:883.70px;">AI Search</span>
<span class="t" style="top:805.00px;font-size:16.4px;line-height:20px;color:#13141a;letter-spacing:0.276px;left:702.00px;">Pages with only one internal link</span>
<span class="t" style="top:806.00px;font-size:16.4px;line-height:20px;color:#1264bf;letter-spacing:0.394px;right:384.61px;">50 issues</span>
<span class="t" style="top:805.00px;font-size:16.4px;line-height:20px;color:#6c6e79;letter-spacing:0.448px;left:1755.40px;">How to fix</span>
<span class="t" style="top:808.00px;font-size:11.4px;line-height:14px;color:#fff;font-weight:700;letter-spacing:0.255px;left:959.90px;">AI Search</span>
<span class="t" style="top:876.00px;font-size:16.4px;line-height:20px;color:#545868;letter-spacing:0.393px;left:1190.00px;">View all issues</span>
<span class="t" style="top:938.00px;font-size:19px;line-height:24px;color:#13141a;font-weight:700;letter-spacing:-0.192px;left:47.60px;">Thematic Reports</span>
<span class="t" style="top:1008.00px;font-size:16.4px;line-height:20px;color:#13141a;letter-spacing:0.267px;left:72.00px;">Robots.txt</span>
<span class="t" style="top:1038.00px;font-size:14px;line-height:18px;color:#6c6e79;letter-spacing:0.298px;left:72.00px;">No changes</span>
<span class="t" style="top:1008.00px;font-size:16.4px;line-height:20px;color:#13141a;letter-spacing:0.418px;left:374.80px;">Crawlability</span>
<span class="t" style="top:1032.00px;font-size:28.5px;line-height:36px;color:#2b84e6;font-weight:700;left:410.30px;transform:scaleX(1.0232);transform-origin:left center;">100%</span>
<span class="t" style="top:1008.00px;font-size:16.4px;line-height:20px;color:#13141a;letter-spacing:-0.184px;left:677.60px;">HTTPS</span>
<span class="t" style="top:1032.00px;font-size:28.5px;line-height:36px;color:#2b84e6;font-weight:700;left:713.10px;transform:scaleX(1.0164);transform-origin:left center;">100%</span>
<span class="t" style="top:1008.00px;font-size:16.4px;line-height:20px;color:#13141a;letter-spacing:0.101px;left:980.40px;">International SEO</span>
<span class="t" style="top:1032.00px;font-size:28.5px;line-height:36px;color:#2b84e6;font-weight:700;left:1015.90px;transform:scaleX(1.0272);transform-origin:left center;">97%</span>
<span class="t" style="top:1008.00px;font-size:16.4px;line-height:20px;color:#13141a;letter-spacing:0.227px;left:1283.20px;">Core Web Vitals</span>
<span class="t" style="top:1032.00px;font-size:28.5px;line-height:36px;color:#c1c3cc;font-weight:700;left:1318.70px;transform:scaleX(1.0222);transform-origin:left center;">n/a</span>
<span class="t" style="top:1008.00px;font-size:16.4px;line-height:20px;color:#13141a;letter-spacing:0.291px;left:1586.00px;">Site Performance</span>
<span class="t" style="top:1032.00px;font-size:28.5px;line-height:36px;color:#2b84e6;font-weight:700;left:1621.50px;transform:scaleX(1.0095);transform-origin:left center;">100%</span>
</div></body></html>
